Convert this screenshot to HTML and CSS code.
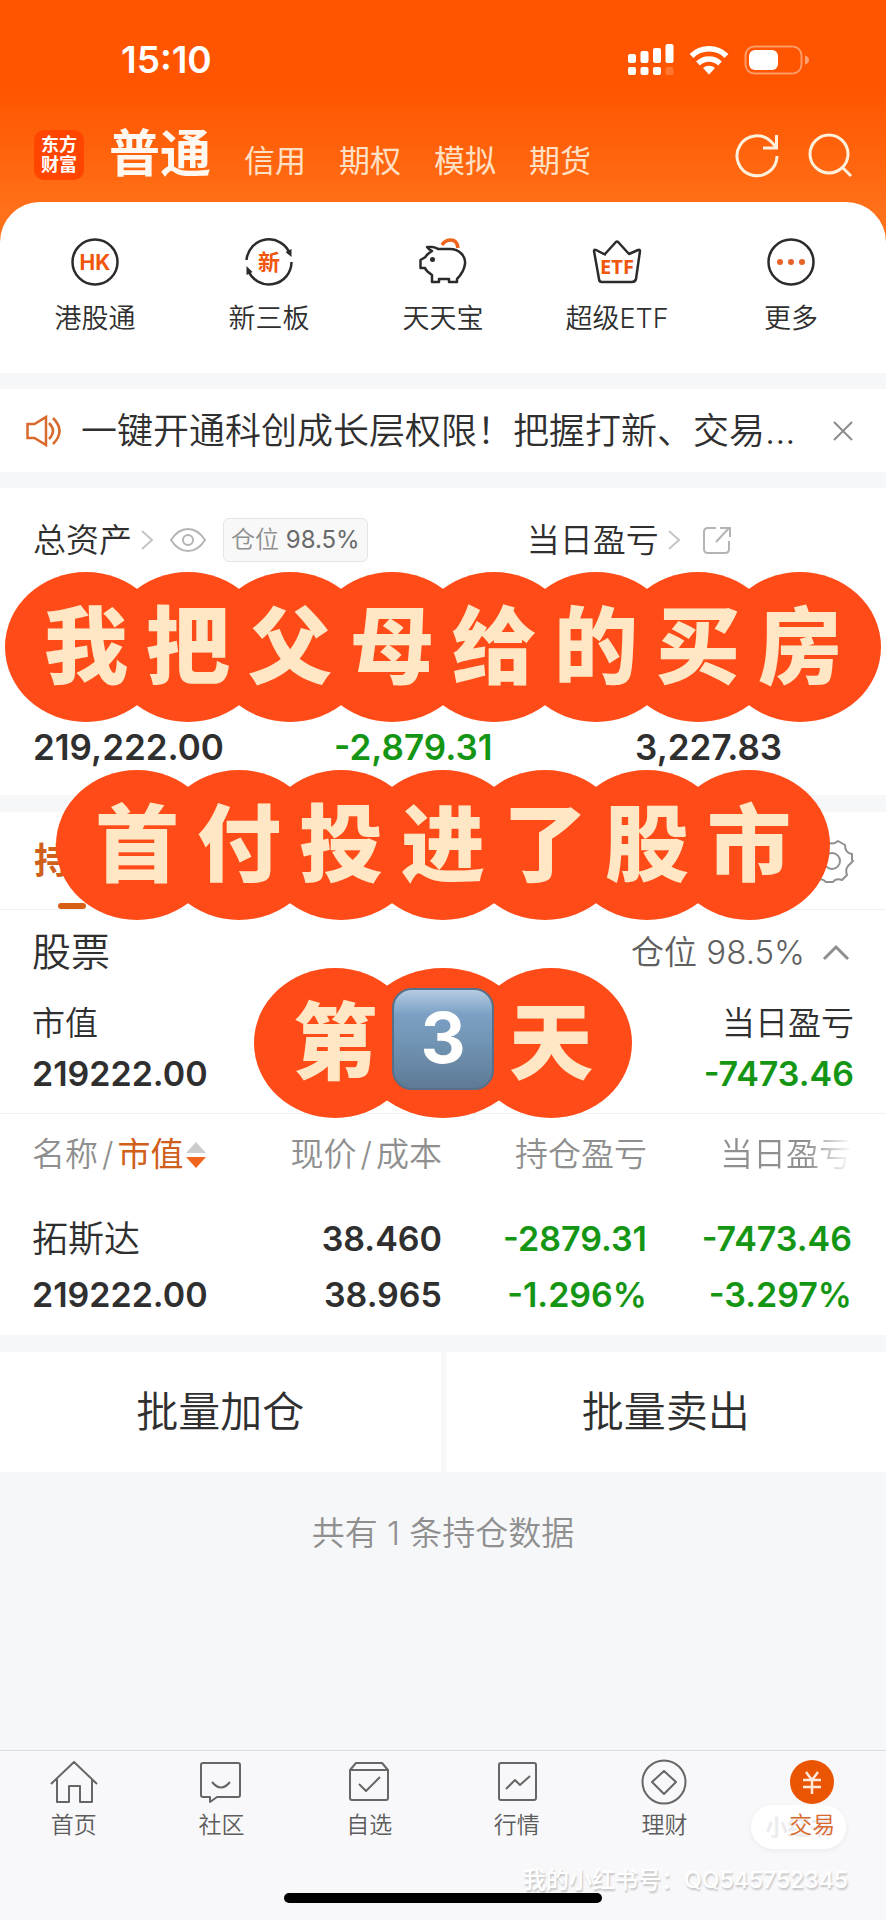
FILE: index.html
```html
<!DOCTYPE html>
<html lang="zh-CN">
<head>
<meta charset="utf-8">
<meta name="viewport" content="width=device-width, initial-scale=1">
<title>东方财富 交易</title>
<link rel="stylesheet" href="styles.css">
</head>
<body>
<header class="top">
  <div class="status">
    <time class="clock">15:10</time>
    <div class="status-icons">
      <svg width="46" height="32" viewBox="0 0 46 32" fill="#fff" aria-hidden="true">
        <rect x="0" y="10" width="8" height="9" rx="2"/><rect x="12.500" y="7" width="8" height="12" rx="2"/><rect x="25" y="4" width="8" height="15" rx="2"/><rect x="37.500" y="0" width="8" height="19" rx="2"/>
        <rect x="0" y="23" width="8" height="8" rx="2"/><rect x="12.500" y="23" width="8" height="8" rx="2"/><rect x="25" y="23" width="8" height="8" rx="2"/><rect x="37.500" y="23" width="8" height="8" rx="2" opacity=".2"/>
      </svg>
      <svg width="40" height="30" viewBox="0 0 40 30" fill="none" stroke="#fff" stroke-width="5.500" aria-hidden="true">
        <path d="M2.500 11a25 25 0 0 1 35 0"/><path d="M9 18.500a16 16 0 0 1 22 0"/><path d="M20 29.500l-6-6.500a9 9 0 0 1 12 0z" fill="#fff" stroke="none"/>
      </svg>
      <svg width="66" height="30" viewBox="0 0 66 30" aria-hidden="true">
        <rect x="1.500" y="1.500" width="56" height="27" rx="9" fill="none" stroke="#fff" stroke-opacity=".4" stroke-width="2"/>
        <rect x="5" y="5" width="29" height="20" rx="6" fill="#fff"/><path d="M61 10.500q4 1.500 4 4.500t-4 4.500z" fill="#fff" fill-opacity=".45"/>
      </svg>
    </div>
  </div>
  <div class="brand-row">
    <div class="logo">东方<br>财富</div>
    <nav class="accounts">
      <a class="current" href="#">普通</a><a href="#">信用</a><a href="#">期权</a><a href="#">模拟</a><a href="#">期货</a>
    </nav>
    <button class="icon-btn" aria-label="刷新">
      <svg width="44" height="44" viewBox="0 0 44 44" fill="none" stroke="#fff0dc" stroke-width="3"><path d="M42 23A20 20 0 1 1 36.500 9L41 14"/><path d="M41.500 2v13H28"/></svg>
    </button>
    <button class="icon-btn" aria-label="搜索">
      <svg width="44" height="44" viewBox="0 0 44 44" fill="none" stroke="#fff0dc" stroke-width="3"><circle cx="21" cy="21" r="19"/><path d="M34 34l9 9"/></svg>
    </button>
  </div>
</header>

<main class="content">
  <nav class="shortcuts">
    <a href="#">
      <svg width="50" height="50" viewBox="0 0 50 50"><circle cx="25" cy="25" r="22.500" class="ink"/><text x="25" y="33" class="glyph" font-size="21">HK</text></svg>
      <span>港股通</span>
    </a>
    <a href="#">
      <svg width="50" height="50" viewBox="0 0 50 50"><path class="ink" d="M2.500 23A22.500 22.500 0 0 1 46 17M47.500 25A22.500 22.500 0 0 1 4 33"/><path d="M41.500 15l6-3v8zM8.500 35l-6 3v-9z" fill="#2b2b2b"/><text x="25" y="33" class="glyph" font-size="22">新</text></svg>
      <span>新三板</span>
    </a>
    <a href="#">
      <svg width="50" height="50" viewBox="0 0 50 50"><path class="ink" d="M14 14C12 13 10 12 9 10h5c3 0 4 1 6 2h12c9 0 16 7 15 15-1 7-4 11-8 15v3h-8v-3H21v3h-7v-7C11 36 8 34 7 31H2.500v-8l5-3C8 18 11 16 14 14z"/><circle cx="14.500" cy="22.500" r="2.500" fill="#2b2b2b"/><path d="M24 8q3-5 9-5t7 8" fill="none" stroke="#f0641e" stroke-width="3.500"/></svg>
      <span>天天宝</span>
    </a>
    <a href="#">
      <svg width="50" height="50" viewBox="0 0 50 50"><path class="ink" d="M13 17L23 6q2-3 4 0l10 11 9-4q2-1 2 1l-4 28q-1 3-4 3H10q-3 0-3-3L2 14q0-2 2-1l10 5"/><text x="25" y="37" class="glyph etf" font-size="21">ETF</text></svg>
      <span>超级ETF</span>
    </a>
    <a href="#">
      <svg width="50" height="50" viewBox="0 0 50 50"><circle cx="25" cy="25" r="22.500" class="ink"/><g fill="#e8632a"><circle cx="14" cy="25" r="3"/><circle cx="25" cy="25" r="3"/><circle cx="36" cy="25" r="3"/></g></svg>
      <span>更多</span>
    </a>
  </nav>

  <section class="notice">
    <svg width="36" height="32" viewBox="0 0 36 32" fill="none" stroke="#d9682c" stroke-width="2.500" aria-hidden="true"><path d="M1.500 9h7L20 2v28L8.500 23h-7zM23 8q8 8 0 16M27 3q13 13 0 26"/></svg>
    <p>一键开通科创成长层权限！把握打新、交易...</p>
    <button class="close" aria-label="关闭"><svg width="20" height="20" viewBox="0 0 20 20" stroke="#8c8c8c" stroke-width="2"><path d="M1 1l18 18M19 1L1 19"/></svg></button>
  </section>

  <section class="summary">
    <div class="summary-head">
      <div class="inline">
        <span>总资产</span>
        <svg class="chev" width="14" height="22" viewBox="0 0 14 22"><path d="M2 2l10 9-10 9"/></svg>
        <svg class="eye" width="38" height="26" viewBox="0 0 38 26"><path d="M2 13Q9 2 19 2t17 11Q29 24 19 24T2 13z"/><circle cx="19" cy="13" r="5"/></svg>
        <span class="badge">仓位 <b>98.5%</b></span>
      </div>
      <div class="inline">
        <span>当日盈亏</span>
        <svg class="chev" width="14" height="22" viewBox="0 0 14 22"><path d="M2 2l10 9-10 9"/></svg>
        <svg class="share" width="30" height="30" viewBox="0 0 30 30"><path d="M14 3H6Q2 3 2 7v17q0 4 4 4h17q4 0 4-4v-8M14 17L27 3M18 3h10v9"/></svg>
      </div>
    </div>
    <div class="summary-values">
      <span>219,222.00</span><span class="down">-2,879.31</span><span>3,227.83</span>
    </div>
  </section>

  <section class="holdings">
    <div class="tabs">
      <button class="tab">持仓</button>
      <button class="icon-btn" aria-label="设置">
        <svg width="44" height="44" viewBox="0 0 44 44" fill="none" stroke="#8f8f8f" stroke-width="2" stroke-linejoin="round"><path d="M16 2q6 5 12 0l7 4q0 8 7 9v6q1 1 1 1l-5 5q-3 4-1 9l-5 5q-6-2-9 2h-7q-4-4-9-2l-5-5q2-5-1-9l-4-5 1-7q7-1 7-9z"/><circle cx="22" cy="22" r="8"/></svg>
      </button>
    </div>
    <div class="group-head">
      <h2>股票</h2>
      <button class="ratio">仓位 98.5%<svg width="28" height="18" viewBox="0 0 28 18" fill="none" stroke="#8f8f8f" stroke-width="3"><path d="M2 16L14 4l12 12"/></svg></button>
    </div>
    <dl class="group-total">
      <div><dt>市值</dt><dd>219222.00</dd></div>
      <div><dt>当日盈亏</dt><dd class="down">-7473.46</dd></div>
    </dl>
    <table>
      <thead>
        <tr>
          <th>名称<i>/</i><em>市值</em><svg class="sort" width="20" height="28" viewBox="0 0 20 28"><path d="M10 1l10 11H0z" fill="#ccc"/><path d="M0 16h20L10 27z" fill="#f0641e"/></svg></th>
          <th>现价<i>/</i>成本</th><th>持仓盈亏</th><th class="fade">当日盈亏</th>
        </tr>
      </thead>
      <tbody>
        <tr><td class="name">拓斯达</td><td>38.460</td><td class="down">-2879.31</td><td class="down">-7473.46</td></tr>
        <tr><td>219222.00</td><td>38.965</td><td class="down">-1.296%</td><td class="down">-3.297%</td></tr>
      </tbody>
    </table>
  </section>

  <div class="batch"><button>批量加仓</button><button>批量卖出</button></div>
  <p class="count">共有 1 条持仓数据</p>

  <div class="caption">
    <p><span>我</span><span>把</span><span>父</span><span>母</span><span>给</span><span>的</span><span>买</span><span>房</span></p>
    <p><span>首</span><span>付</span><span>投</span><span>进</span><span>了</span><span>股</span><span>市</span></p>
    <p><span>第</span><span class="wide"><b class="keycap">3</b></span><span>天</span></p>
  </div>
</main>

<footer class="bottom">
  <nav class="tabbar">
    <a href="#"><svg width="48" height="44" viewBox="0 0 48 44"><path d="M1 23L24 1l23 22M7 18v23h12V25h11v16h12V18"/></svg><span>首页</span></a>
    <a href="#"><svg width="48" height="44" viewBox="0 0 48 44"><path d="M6 2h35q2 0 2 2v30q0 2-2 2H20l-7 5v-5H6q-2 0-2-2V4q0-2 2-2zM15 21q9 11 18 0"/></svg><span>社区</span></a>
    <a href="#"><svg width="48" height="44" viewBox="0 0 48 44"><path d="M5 9l6-7h26l6 7v28q0 2-2 2H7q-2 0-2-2V9h38M14 23l7 7 14-14"/></svg><span>自选</span></a>
    <a href="#"><svg width="48" height="44" viewBox="0 0 48 44"><rect x="6" y="2" width="37" height="37" rx="2"/><path d="M13 28l9-9 5 5 10-9"/></svg><span>行情</span></a>
    <a href="#"><svg width="48" height="44" viewBox="0 0 48 44"><circle cx="24" cy="21" r="21.500"/><path d="M24 10l12 11-12 12-12-12z"/></svg><span>理财</span></a>
    <a class="active" href="#"><svg width="48" height="44" viewBox="0 0 48 44"><circle cx="24" cy="21" r="22" class="disc"/><path class="yen" d="M18 11l6 8 6-8M24 19v14M15 19h18M15 26h18"/></svg><span>交易</span><small class="pill">小红书</small></a>
  </nav>
  <p class="watermark">我的小红书号：QQ545752345</p>
  <div class="home-bar"></div>
</footer>
</body>
</html>
```
FILE: styles.css
```css
* { box-sizing: border-box; margin: 0; padding: 0; }

body {
  min-height: 100vh;
  display: flex;
  flex-direction: column;
  background: #f6f7f9;
  color: #2f2f2f;
  font: 350 33px/44px Inter, "Noto Sans CJK SC", sans-serif;
}

a { color: inherit; text-decoration: none; }
button { border: 0; background: none; color: inherit; font: inherit; cursor: pointer; }
svg { display: block; flex: none; overflow: visible; }
.icon-btn { width: 44px; height: 44px; }
.down { color: #149614; }

/* header */
.top {
  padding: 0 34px 48px;
  background: linear-gradient(#ff5500 90px, #ff7018 210px);
}
.status {
  display: flex;
  justify-content: space-between;
  align-items: center;
  height: 120px;
  padding: 0 42px 0 87px;
}
.clock { color: #fff; font-size: 37px; font-weight: 600; }
.status-icons { display: flex; align-items: center; gap: 15px; }
.brand-row { display: flex; align-items: center; height: 82px; padding-bottom: 12px; }
.logo {
  width: 50px;
  height: 50px;
  padding-top: 5px;
  border-radius: 10px;
  background: #ff4500;
  color: #fff;
  font-size: 18px;
  font-weight: 700;
  line-height: 20px;
  text-align: center;
}
.accounts {
  flex: 1;
  display: flex;
  align-items: baseline;
  gap: 33px;
  padding: 4px 0 0 25px;
  color: #ffe0c4;
  font-size: 31px;
  font-weight: 400;
}
.accounts .current { color: #fff8f0; font-size: 51px; font-weight: 700; }
.brand-row .icon-btn + .icon-btn { margin-left: 29px; }

/* shortcuts */
.content { position: relative; margin-top: -48px; }
.shortcuts {
  display: grid;
  grid-template-columns: repeat(5, 1fr);
  padding: 35px 8px 32px;
  border-radius: 40px 40px 0 0;
  background: #fff;
  font-size: 27px;
}
.shortcuts a { display: flex; flex-direction: column; align-items: center; gap: 10px; }
.ink { fill: none; stroke: #2b2b2b; stroke-width: 2.5px; stroke-linejoin: round; }
.glyph { fill: #f0560c; font-weight: 700; text-anchor: middle; }
.etf { font-family: "Open Sans", sans-serif; font-size: 20px; }

/* notice */
.notice {
  display: flex;
  align-items: center;
  height: 83px;
  margin: 16px 0;
  padding: 0 33px 0 26px;
  background: #fff;
  font-size: 36px;
}
.notice p { flex: 1; padding-left: 19px; white-space: nowrap; }
.close { width: 20px; height: 20px; }

/* asset summary */
.summary { padding: 30px 0 26px 33px; background: #fff; }
.summary-head { display: grid; grid-template-columns: 11fr 8fr; margin-bottom: 163px; }
.inline { display: flex; align-items: center; white-space: nowrap; }
.chev { margin: 0 15px 0 8px; fill: none; stroke: #c4c4c4; stroke-width: 2px; }
.eye { fill: none; stroke: #b4b4b4; stroke-width: 2px; }
.share { margin-left: 6px; fill: none; stroke: #b4b4b4; stroke-width: 2px; }
.badge {
  height: 44px;
  margin-left: 16px;
  padding: 0 7px;
  border: 1px solid #e4e4e4;
  border-radius: 6px;
  background: #f8f8f9;
  color: #8f8f8f;
  font-size: 24px;
  line-height: 42px;
}
.badge b { color: #6a6a6a; font-weight: 400; }
.summary-values { display: grid; grid-template-columns: 6fr 6fr 5fr; font-size: 35px; font-weight: 600; }

/* holdings */
.holdings { margin-top: 17px; background: #fff; }
.tabs {
  display: flex;
  justify-content: space-between;
  align-items: center;
  height: 98px;
  padding: 0 32px 0 34px;
  border-bottom: 1px solid #f0f1f3;
}
.tab {
  position: relative;
  height: 97px;
  color: #cf5f1a;
  font-size: 36px;
  font-weight: 700;
}
.tab::after {
  content: "";
  position: absolute;
  left: 50%;
  bottom: 0;
  width: 28px;
  height: 6px;
  margin-left: -12px;
  border-radius: 3px;
  background: #d95f14;
}
.group-head { display: flex; justify-content: space-between; align-items: center; height: 84px; padding: 0 36px 0 32px; }
.group-head h2 { font-size: 39px; font-weight: inherit; }
.ratio { display: flex; align-items: center; gap: 17px; color: #5f5f5f; }
.group-total {
  display: flex;
  justify-content: space-between;
  padding: 0 32px 17px;
  border-bottom: 1px solid #f0f1f3;
}
.group-total dt { line-height: 58px; }
.group-total dd { font-size: 34px; font-weight: 600; }
.group-total div:last-child { text-align: right; }

table { width: 100%; table-layout: fixed; border-spacing: 0; padding: 0 34px 12px 32px; }
th { height: 84px; padding-bottom: 4px; color: #8f8f8f; font-weight: inherit; text-align: right; white-space: nowrap; }
th:first-child, td:first-child { text-align: left; }
th i { padding: 0 4px; font-style: normal; }
th em { color: #cf5f1a; font-style: normal; font-weight: 400; }
.sort { display: inline-block; margin-left: 2px; vertical-align: -3px; }
.fade {
  background: linear-gradient(90deg, #8f8f8f 78%, #fff);
  -webkit-background-clip: text;
  background-clip: text;
  color: transparent;
}
td { height: 56px; font-size: 34px; font-weight: 600; text-align: right; }
tbody tr:first-child td { height: 69px; padding-top: 13px; }
td.name { font-size: 36px; font-weight: 350; }

.batch { display: grid; grid-template-columns: 1fr 1fr; gap: 5px; margin-top: 17px; }
.batch button { height: 120px; background: #fff; font-size: 42px; }
.count { padding: 39px 0; color: #8f8f8f; text-align: center; }

/* scalloped caption lying over the page */
.caption { position: absolute; top: 370px; left: 0; right: 0; }
.caption p { display: flex; justify-content: center; isolation: isolate; margin-bottom: 48px; }
.caption span {
  position: relative;
  width: 102px;
  color: #ffe6c4;
  font-size: 84px;
  font-weight: 900;
  line-height: 150px;
  text-align: center;
}
.caption span::before {
  content: "";
  position: absolute;
  z-index: -1;
  inset: 0 -30px;
  border-radius: 50%;
  background: #ff4b17;
}
.caption .wide { display: flex; justify-content: center; align-items: center; width: 114px; padding-bottom: 8px; }
.keycap {
  width: 102px;
  height: 102px;
  border: 2px solid #56708a;
  border-radius: 20px;
  background: linear-gradient(#b4cce2, #7ba0c4 25%, #7396b6 50%, #5d7a96);
  color: #fff;
  font-size: 70px;
  font-weight: 700;
  line-height: 96px;
}

/* bottom bar */
.bottom {
  position: relative;
  margin-top: auto;
  padding: 10px 0 17px;
  border-top: 1px solid #d9dce1;
  background: #f8f8fa;
}
.tabbar { display: grid; grid-template-columns: repeat(6, 1fr); margin-bottom: 48px; color: #5c5c5c; font-size: 23px; line-height: 40px; }
.tabbar a { position: relative; display: flex; flex-direction: column; align-items: center; isolation: isolate; }
.tabbar svg { fill: none; stroke: #666; stroke-width: 2px; stroke-linejoin: round; }
.tabbar .disc { fill: #ea5504; stroke: none; }
.tabbar .yen { stroke: #ffe9d8; stroke-width: 2.5px; }
.tabbar .active { color: #d9682c; }
.pill {
  position: absolute;
  z-index: -1;
  top: 44px;
  right: 40px;
  width: 95px;
  height: 44px;
  border-radius: 22px;
  background: #fff;
  box-shadow: 0 2px 6px #0000000d;
  color: #ececef;
  font-size: 22px;
  font-weight: 700;
  line-height: 44px;
  text-align: center;
}
.watermark {
  position: absolute;
  top: 114px;
  right: 38px;
  color: #fff;
  font-size: 23px;
  font-weight: 500;
  line-height: 30px;
  text-shadow: 1px 2px 2px #00000038;
}
.home-bar { position: relative; width: 36%; height: 10px; margin: 0 auto; border-radius: 5px; background: #000; }
```
